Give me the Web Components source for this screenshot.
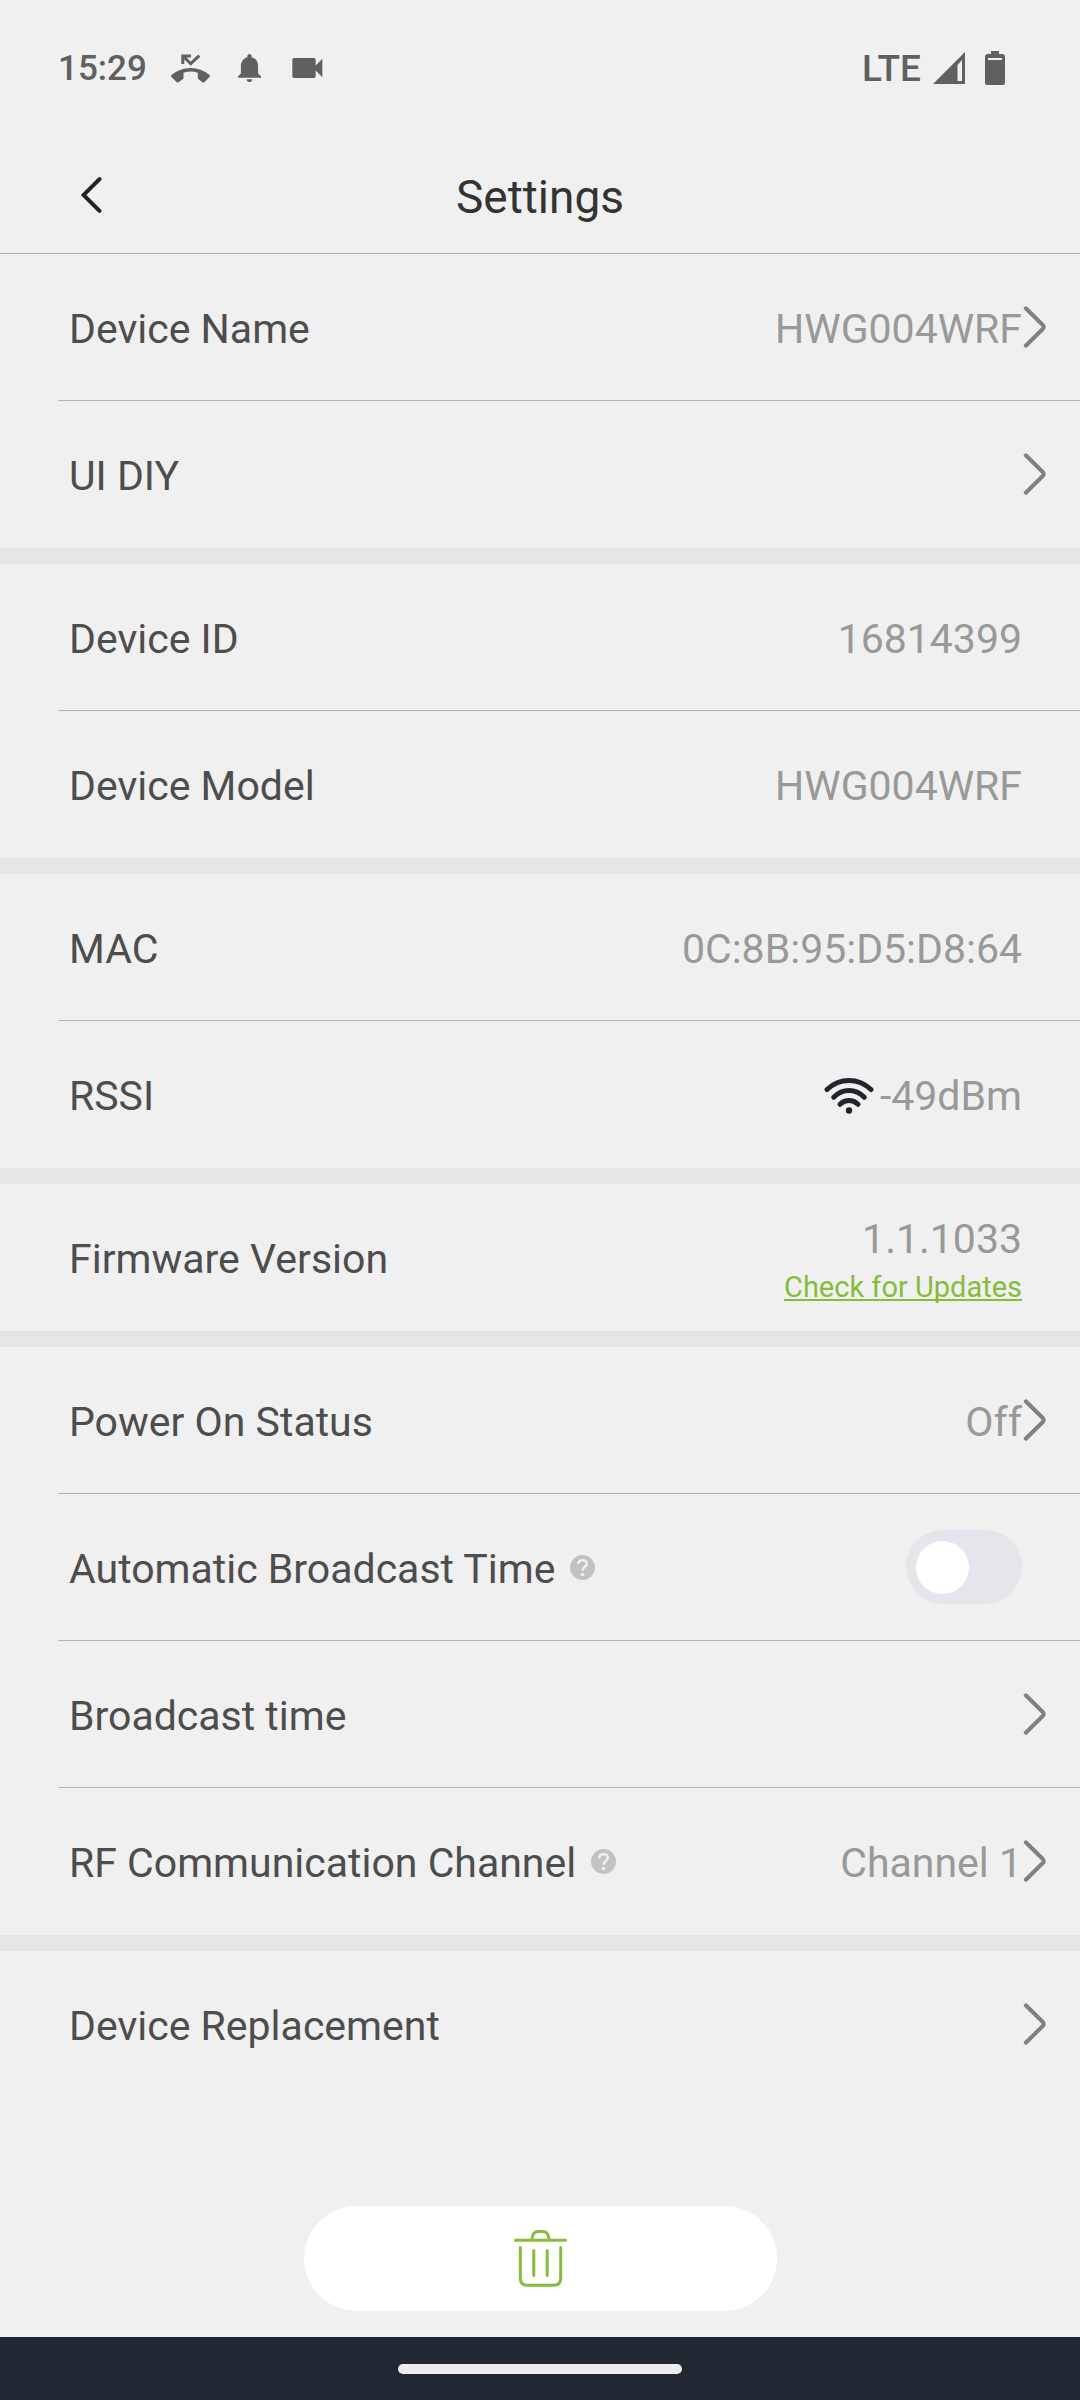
<!DOCTYPE html>
<html lang="en">
<head>
<meta charset="utf-8">
<meta name="viewport" content="width=device-width, initial-scale=1">
<title>Settings</title>
<style>
    :root {
        --page: #f0f0f0;
        --band: #e5e5e5;
        --line: #b2b2b2;
        --label: #4d4d4d;
        --value: #999999;
        --accent: #86bc3c;
        --status: #606060;
        --inset: 58px;
    }
    body {
        margin: 0;
        background: var(--page);
        color: var(--label);
        font-family: Roboto, "Liberation Sans", sans-serif;
        font-size: 41px;
        line-height: 48px;
    }
</style>
</head>
<body>
<settings-screen>
    <status-bar slot="top" time="15:29" network="LTE"></status-bar>
    <title-bar slot="top">Settings</title-bar>

    <settings-group>
        <nav-row label="Device Name" value="HWG004WRF"></nav-row>
        <nav-row label="UI DIY"></nav-row>
    </settings-group>
    <settings-group>
        <info-row label="Device ID">16814399</info-row>
        <info-row label="Device Model">HWG004WRF</info-row>
    </settings-group>
    <settings-group>
        <info-row label="MAC">0C:8B:95:D5:D8:64</info-row>
        <info-row label="RSSI"><wifi-icon></wifi-icon>-49dBm</info-row>
    </settings-group>
    <settings-group>
        <info-row label="Firmware Version">1.1.1033<update-link slot="below">Check for Updates</update-link></info-row>
    </settings-group>
    <settings-group>
        <nav-row label="Power On Status" value="Off"></nav-row>
        <switch-row label="Automatic Broadcast Time" help></switch-row>
        <nav-row label="Broadcast time"></nav-row>
        <nav-row label="RF Communication Channel" value="Channel 1" help></nav-row>
    </settings-group>
    <settings-group>
        <nav-row label="Device Replacement"></nav-row>
    </settings-group>

    <delete-button slot="bottom"></delete-button>
    <gesture-bar slot="bottom"></gesture-bar>
</settings-screen>

<script>
/** Small base class: builds an open shadow root from styles() and markup(). */
class BaseElement extends HTMLElement {
    constructor() {
        super();
        this.attachShadow({ mode: 'open' });
    }

    connectedCallback() {
        this.shadowRoot.innerHTML = `<style>${this.styles()}</style>${this.markup()}`;
    }

    attr(name) { return this.getAttribute(name) || ''; }
    styles() { return ''; }
    markup() { return '<slot></slot>'; }
}

// ==========================================
// SCREEN AND BARS
// ==========================================

class SettingsScreen extends BaseElement {
    styles() {
        return `
            :host { display: flex; flex-direction: column; min-height: 100vh; }
            main { flex: 1; }
        `;
    }
    markup() {
        return `
            <header><slot name="top"></slot></header>
            <main><slot></slot></main>
            <footer><slot name="bottom"></slot></footer>
        `;
    }
}

class StatusBar extends BaseElement {
    styles() {
        return `
            :host {
                display: flex; align-items: center; justify-content: space-between;
                height: 136px; padding: 0 75px 0 58px; box-sizing: border-box;
                color: var(--status); font-weight: 500;
            }
            div { display: flex; align-items: center; }
            span { padding-top: 2px; }
            svg { display: block; fill: currentColor; }
            .left { gap: 24px; font-size: 35px; }
            .right { gap: 12px; font-size: 37px; }
            .notices { gap: 28px; }
            .signals { gap: 20px; }
        `;
    }
    markup() {
        return `
            <div class="left">
                <span>${this.attr('time')}</span>
                <div class="notices">
                    <!-- missed call -->
                    <svg width="39" height="30" viewBox="0 0 39 30" aria-hidden="true">
                        <path d="M.5 22Q9 15 19.500 15T38.500 22Q39.300 23 38.500 24L33.500 29Q32.500 30 31.500 29.200L27.300 26Q26.800 25.500 26.800 24.500V19.700Q19.500 17.500 12.500 19.700V24.500Q12.500 25.500 12 26L7.500 29.200Q6.500 30 5.500 29L.5 24Q-.3 23 .5 22Z"/>
                        <path d="M11.800 11V3H20M12.500 3.500L19.700 10.700L28.300 2.700" fill="none" stroke="currentColor" stroke-width="3"/>
                    </svg>
                    <svg width="23" height="28" viewBox="4 2.500 16 19.500" aria-hidden="true">
                        <path d="M12 22c1.100 0 2-.9 2-2h-4c0 1.100.9 2 2 2zm6-6v-5c0-3.070-1.640-5.640-4.500-6.320V4c0-.83-.67-1.500-1.500-1.500s-1.500.67-1.500 1.500v.68C7.630 5.360 6 7.920 6 11v5l-2 2v1h16v-1l-2-2z"/>
                    </svg>
                    <svg width="34" height="20" viewBox="1.200 6 20 12" aria-hidden="true">
                        <path d="M17 10.500V7c0-.55-.45-1-1-1H4c-.55 0-1 .45-1 1v10c0 .55.45 1 1 1h12c.55 0 1-.45 1-1v-3.500l4 4v-11l-4 4z"/>
                    </svg>
                </div>
            </div>
            <div class="right">
                <span>${this.attr('network')}</span>
                <div class="signals">
                    <svg width="32" height="32" viewBox="0 0 32 32" aria-hidden="true">
                        <path fill-rule="evenodd" d="M32 0V32H0ZM24.500 13V29H29V8Z"/>
                    </svg>
                    <svg width="20" height="34" viewBox="0 0 20 34" aria-hidden="true">
                        <path fill-rule="evenodd" d="M6 0H14V3H18Q20 3.500 20 5.500V31.500Q20 34 18 34H2Q0 34 0 31.500V5.500Q0 3.500 2 3H6ZM3 7V9H17V7Z"/>
                    </svg>
                </div>
            </div>
        `;
    }
}

class TitleBar extends BaseElement {
    styles() {
        return `
            :host {
                display: grid; grid-template-columns: 118px 1fr 118px; align-items: center;
                height: 118px; box-sizing: border-box; border-bottom: 1px solid var(--line);
            }
            button {
                display: flex; align-items: center; justify-content: flex-end;
                align-self: stretch; padding: 0 16px; border: 0; background: none;
            }
            h1 {
                margin: 0; padding-top: 4px; color: #333;
                font-size: 46px; font-weight: 400; line-height: 56px; text-align: center;
            }
            svg { display: block; }
        `;
    }
    markup() {
        return `
            <button type="button" aria-label="Back">
                <svg width="21" height="36" viewBox="0 0 21 36" fill="none" stroke="#222" stroke-width="4" stroke-linecap="round">
                    <path d="M18.500 2.200L2.500 18L18.500 33.800"/>
                </svg>
            </button>
            <h1><slot></slot></h1>
        `;
    }
}

// ==========================================
// ROWS
// ==========================================

class SettingsGroup extends BaseElement {
    styles() {
        return `
            :host { display: block; border-bottom: 16px solid var(--band); }
            :host(:nth-last-of-type(1)) { border-bottom: 0; }
            ::slotted(:last-child) { --rule: transparent; }
        `;
    }
}

/** Shared row layout: label, optional help button, then whatever control() returns. */
class SettingsRow extends BaseElement {
    styles() {
        return `
            :host { display: block; }
            .row {
                display: flex; align-items: stretch; justify-content: space-between;
                height: 146px; padding-left: 69px;
            }
            .rule { height: 1px; margin-left: var(--inset); background: var(--rule, var(--line)); }
            .name { display: flex; align-items: center; gap: 15px; }
            .text { padding-top: 4px; }
            .value { padding-top: 4px; color: var(--value); }
            .help { display: block; padding: 0; border: 0; background: none; }
            svg { display: block; }
        `;
    }
    markup() {
        return `
            <div class="row">
                <div class="name">
                    <label class="text" for="control">${this.attr('label')}</label>
                    ${this.hasAttribute('help') ? this.help() : ''}
                </div>
                ${this.control()}
            </div>
            <div class="rule"></div>
        `;
    }
    help() {
        return `
            <button class="help" type="button" aria-label="Help">
                <svg width="25" height="25" viewBox="0 0 25 25" fill="none">
                    <circle cx="12.500" cy="12.500" r="12.500" fill="#c2c2c2"/>
                    <path d="M8.200 9.300C8.200 6.700 10 5.200 12.500 5.200C15 5.200 16.800 6.700 16.800 8.900C16.800 11.600 12.500 12 12.500 15.800" stroke="#f0f0f0" stroke-width="2.600"/>
                    <circle cx="12.500" cy="19.500" r="1.800" fill="#f0f0f0"/>
                </svg>
            </button>
        `;
    }
    control() { return ''; }
}

class NavRow extends SettingsRow {
    styles() {
        return super.styles() + `
            .go {
                display: flex; flex: 1; align-items: center; justify-content: flex-end;
                padding: 0 32px 0 0; border: 0; background: none; font: inherit;
            }
        `;
    }
    control() {
        return `
            <button class="go" id="control" type="button">
                <span class="value">${this.attr('value')}</span>
                <svg width="26" height="42" viewBox="0 0 26 42" fill="none" stroke="#808080" stroke-width="4" stroke-linecap="round" stroke-linejoin="round">
                    <path d="M3.800 2.300L20.800 19Q22.500 21 20.800 23L3.800 39.700"/>
                </svg>
            </button>
        `;
    }
}

class InfoRow extends SettingsRow {
    styles() {
        return super.styles() + `
            output {
                display: flex; flex-direction: column; align-items: flex-end;
                justify-content: center; padding-right: 58px;
            }
            .value { display: flex; align-items: center; gap: 6px; }
        `;
    }
    control() {
        return `
            <output id="control">
                <span class="value"><slot></slot></span>
                <slot name="below"></slot>
            </output>
        `;
    }
}

class SwitchRow extends SettingsRow {
    styles() {
        return super.styles() + `
            .holder { display: flex; align-items: center; padding-right: 58px; }
            input {
                appearance: none; display: flex; align-items: center;
                width: 116px; height: 74px; margin: 0; padding: 0 10px; box-sizing: border-box;
                border-radius: 37px; background: #e5e6eb;
            }
            input::before { content: ""; width: 53px; height: 53px; border-radius: 50%; background: #fff; }
            input:checked { justify-content: flex-end; background: var(--accent); }
        `;
    }
    control() {
        return `<div class="holder"><input id="control" type="checkbox" role="switch"></div>`;
    }
}

// ==========================================
// ROW CONTENT
// ==========================================

class WifiIcon extends BaseElement {
    styles() {
        return `
            :host { display: block; }
            svg { display: block; }
        `;
    }
    markup() {
        return `
            <svg width="50" height="38" viewBox="0 0 50 38" fill="none" stroke="#20242c" stroke-width="5" stroke-linecap="round" aria-hidden="true">
                <path d="M3 12.500Q12.500 3.500 25 3.500T47 12.500"/>
                <path d="M9.700 20.200Q16.500 13.500 25 13.500T40.300 20.200"/>
                <path d="M16 27.300Q20 23.500 25 23.500T34 27.300"/>
                <circle cx="25" cy="33.500" r="3.200" fill="#20242c" stroke="none"/>
            </svg>
        `;
    }
}

class UpdateLink extends BaseElement {
    styles() {
        return `
            :host { display: block; padding-top: 8px; font-size: 29px; line-height: 32px; }
            a {
                color: var(--accent); text-decoration: underline;
                text-decoration-thickness: 2px; text-underline-offset: 2px; text-decoration-skip-ink: none;
            }
        `;
    }
    markup() { return '<a href="#update"><slot></slot></a>'; }
}

// ==========================================
// BOTTOM OF THE SCREEN
// ==========================================

class DeleteButton extends BaseElement {
    styles() {
        return `
            :host { display: flex; justify-content: center; padding-bottom: 26px; }
            button {
                display: flex; align-items: center; justify-content: center;
                width: 473px; height: 105px; padding: 0; border: 0; border-radius: 53px; background: #fff;
            }
            svg { display: block; stroke: var(--accent); }
        `;
    }
    markup() {
        return `
            <button type="button" aria-label="Delete device">
                <svg width="53" height="57" viewBox="0 0 53 57" fill="none" stroke-width="3" stroke-linecap="round">
                    <path d="M1.500 10.300H51.500M18 10V9.500Q18.500 1.600 24.500 1.600H28.500Q34.500 1.600 35 9.500V10"/>
                    <path d="M6.300 17.500V48Q6.300 55.300 13.500 55.300H39.500Q46.700 55.300 46.700 48V17.500"/>
                    <path d="M19.800 20.500V45.500M33.200 20.500V45.500"/>
                </svg>
            </button>
        `;
    }
}

class GestureBar extends BaseElement {
    styles() {
        return `
            :host { display: flex; align-items: center; justify-content: center; height: 63px; background: #222831; }
            span { width: 284px; height: 10px; border-radius: 5px; background: #eee; }
        `;
    }
    markup() { return '<span></span>'; }
}

customElements.define('settings-screen', SettingsScreen);
customElements.define('status-bar', StatusBar);
customElements.define('title-bar', TitleBar);
customElements.define('settings-group', SettingsGroup);
customElements.define('nav-row', NavRow);
customElements.define('info-row', InfoRow);
customElements.define('switch-row', SwitchRow);
customElements.define('wifi-icon', WifiIcon);
customElements.define('update-link', UpdateLink);
customElements.define('delete-button', DeleteButton);
customElements.define('gesture-bar', GestureBar);
</script>
</body>
</html>
